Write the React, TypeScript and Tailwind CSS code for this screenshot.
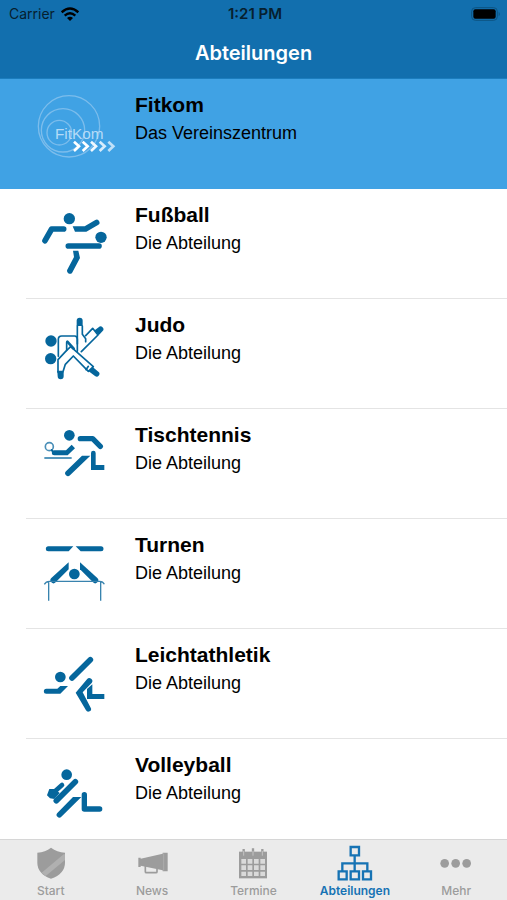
import type { ReactNode } from "react";

type Department = {
  id: string;
  name: string;
  subtitle: string;
  icon: ReactNode;
  highlighted?: boolean;
};

const Pictogram = ({ children }: { children: ReactNode }) => (
  <svg
    viewBox="0 0 270 270"
    className="size-[90px] shrink-0"
    fill="none"
    stroke="#05669c"
    strokeWidth="17"
    strokeLinecap="round"
    strokeLinejoin="round"
    aria-hidden="true"
  >
    {children}
  </svg>
);

const FitkomLogo = () => (
  <svg
    viewBox="0 0 270 270"
    className="size-[90px] shrink-0"
    fill="none"
    aria-hidden="true"
  >
    <g stroke="#7cbdec" strokeWidth="4">
      <circle cx="117" cy="112" r="92" />
      <circle cx="99" cy="124" r="65" />
      <circle cx="88" cy="131" r="37" />
    </g>
    <text
      x="75"
      y="149"
      fontSize="46"
      fill="#b5dbf7"
      fontFamily="Liberation Sans, Arial, sans-serif"
    >
      FitKom
    </text>
    <g strokeWidth="8">
      <path d="M132 158l15 14-15 14M158 158l15 14-15 14" stroke="#fff" />
      <path d="M183 158l15 14-15 14" stroke="#f0f8fe" />
      <path d="M209 158l15 14-15 14" stroke="#d8ecfb" />
      <path d="M235 158l15 14-15 14" stroke="#bfe0f8" />
    </g>
  </svg>
);

const SoccerIcon = () => (
  <Pictogram>
    <g fill="#05669c" stroke="none">
      <circle cx="118" cy="56" r="17" />
      <circle cx="213" cy="112" r="17" />
      <path d="M128 79h36l32-19a8 8 0 0 1 8 15L169 95h-34z" />
      <path d="M129 152h16l5 22-24 45a9 9 0 0 1-15-8l21-40z" />
    </g>
    <path d="M101 87H65L45 122" />
    <path d="M115 138h92" />
  </Pictogram>
);

const JudoIcon = () => (
  <Pictogram>
    <g fill="#05669c" stroke="none">
      <circle cx="63" cy="93" r="17" />
      <circle cx="62" cy="146" r="17" />
      <path d="M140 48V32a8 8 0 0 1 18 0v16z" />
      <path d="M194 61l12-9a8 8 0 0 1 12 11l-12 13z" />
      <path d="M82 185h19v14a8 8 0 0 1-18 0z" />
      <path d="M188 171l17 14a8 8 0 0 1-10 13l-19-14z" />
    </g>
    <g strokeWidth="5">
      <path d="M142 48v54M157 48v25l10 13v9M167 77l21-22 16 20-50 50" />
      <path d="M85 139V88q0-10 10-10h39q8 0 8 10v36" />
      <path d="M84 185v-36l26-28v-24" />
      <path d="M122 110l68 60-15 14-45-46-24 25-7 22H84" />
      <path d="M110 121l12-11M168 179l7-10" />
    </g>
    <path d="M112 95l19 21" strokeWidth="8" />
  </Pictogram>
);

const TableTennisIcon = () => (
  <Pictogram>
    <circle cx="118" cy="46" r="16" fill="#05669c" stroke="none" />
    <circle cx="58" cy="80" r="12" strokeWidth="5" stroke="#4a8fb8" />
    <path d="M65 90l5 7" strokeWidth="6" />
    <path d="M43 114h82" strokeWidth="6" stroke="#5798bd" strokeLinecap="butt" />
    <path d="M151 56h37l23 23" strokeWidth="16" />
    <g fill="#05669c" stroke="none">
      <path d="M73 91h35l17-17 10 11-22 21H73a7 7 0 0 1 0-15z" />
      <path d="M156 107h25l-61 59a8 8 0 0 1-12-12z" />
      <path d="M183 99a7 7 0 0 1 14 0v36h26v15h-40z" />
    </g>
  </Pictogram>
);

const GymnasticsIcon = () => (
  <Pictogram>
    <g transform="translate(0 15)">
      <g fill="#05669c" stroke="none">
        <circle cx="133" cy="117" r="16" />
        <path d="M55 34h75l-14 15H55a7 7 0 0 1 0-15z" />
        <path d="M137 34h76a7 7 0 0 1 0 15h-61z" />
        <path d="M116 82v21l-39 39a8 8 0 0 1-13-13z" />
        <path d="M150 82v21l39 39a8 8 0 0 0 13-13z" />
      </g>
      <path
        d="M43 148q5-9 15-9h151q10 0 14 9M56 140v57M212 140v57"
        strokeWidth="4"
        stroke="#3883ae"
        strokeLinecap="butt"
      />
    </g>
  </Pictogram>
);

const AthleticsIcon = () => (
  <Pictogram>
    <g transform="translate(0 15)">
      <path d="M126 99l55-55" />
      <g fill="#05669c" stroke="none">
        <circle cx="91" cy="96" r="16" />
        <path d="M49 131h33l9-8h23l-23 23H49a7 7 0 0 1 0-15z" />
        <path d="M171 103a8 8 0 0 1 14 11l-27 28 24 46a8 8 0 0 1-14 8l-31-53z" />
        <path d="M171 132l16-14v29h36v15h-52z" />
      </g>
    </g>
  </Pictogram>
);

const VolleyballIcon = () => (
  <Pictogram>
    <g transform="translate(0 30)">
      <path d="M79 122l57-57" />
      <path d="M163 104v43h46" strokeWidth="16" />
      <path d="M70 98l26-23" strokeWidth="14" />
      <g fill="#05669c" stroke="none">
        <circle cx="110" cy="44" r="16" />
        <path d="M129 111h25l-60 59a8 8 0 0 1-12-11z" />
        <path d="M58 87h16l15 12-16 18-13-2-9-9z" />
      </g>
    </g>
  </Pictogram>
);

const departments: Department[] = [
  {
    id: "fitkom",
    name: "Fitkom",
    subtitle: "Das Vereinszentrum",
    icon: <FitkomLogo />,
    highlighted: true,
  },
  { id: "fussball", name: "Fußball", subtitle: "Die Abteilung", icon: <SoccerIcon /> },
  { id: "judo", name: "Judo", subtitle: "Die Abteilung", icon: <JudoIcon /> },
  {
    id: "tischtennis",
    name: "Tischtennis",
    subtitle: "Die Abteilung",
    icon: <TableTennisIcon />,
  },
  { id: "turnen", name: "Turnen", subtitle: "Die Abteilung", icon: <GymnasticsIcon /> },
  {
    id: "leichtathletik",
    name: "Leichtathletik",
    subtitle: "Die Abteilung",
    icon: <AthleticsIcon />,
  },
  {
    id: "volleyball",
    name: "Volleyball",
    subtitle: "Die Abteilung",
    icon: <VolleyballIcon />,
  },
];

const TabIcon = ({ children }: { children: ReactNode }) => (
  <svg viewBox="0 0 108 108" className="size-9 shrink-0" fill="currentColor" aria-hidden="true">
    {children}
  </svg>
);

const tabs = [
  {
    label: "Start",
    icon: (
      <TabIcon>
        <path d="M54 8q18 13 42 15v30q0 33-42 48Q13 86 13 53V23q24-2 41-15z" />
        <path d="M92 28L26 83l12 10L96 45V28z" fill="#b0b0b0" />
      </TabIcon>
    ),
  },
  {
    label: "News",
    icon: (
      <TabIcon>
        <path d="M13 38h7v3l66-15v-3h15v56H86v-3L20 62v4h-7z" />
        <path d="M89 25v52" stroke="#b4b4b4" strokeWidth="2" />
        <path d="M34 63v17q0 3 3 3h29q3 0 3-3V70" fill="none" stroke="currentColor" strokeWidth="5" />
      </TabIcon>
    ),
  },
  {
    label: "Termine",
    icon: (
      <TabIcon>
        <path d="M12 20h84v80H12z" />
        <path d="M26 12v14M54 10v14M82 12v14" stroke="currentColor" strokeWidth="7" />
        <path d="M26 18v14M54 18v14M82 18v14" stroke="#c4c4c4" strokeWidth="3" />
        <path
          d="M19 42h14v14H19zM38 42h14v14H38zM57 42h14v14H57zM76 42h14v14H76zM19 61h14v14H19zM38 61h14v14H38zM57 61h14v14H57zM76 61h14v14H76zM19 80h14v13H19zM38 80h14v13H38zM57 80h14v13H57zM76 80h14v13H76z"
          fill="#dadada"
        />
      </TabIcon>
    ),
  },
  {
    label: "Abteilungen",
    active: true,
    icon: (
      <TabIcon>
        <g fill="none" stroke="currentColor" strokeWidth="7">
          <path d="M41 6h25v25H41zM5 79h24v24H5zM41 79h25v24H41zM78 79h24v24H78z" />
          <path d="M53 31v48M16 79V55h75v24" />
        </g>
      </TabIcon>
    ),
  },
  {
    label: "Mehr",
    icon: (
      <TabIcon>
        <circle cx="20" cy="55" r="13" />
        <circle cx="53" cy="55" r="13" />
        <circle cx="86" cy="55" r="13" />
      </TabIcon>
    ),
  },
];

const StatusBar = () => (
  <div className="grid h-7 grid-cols-3 items-center pl-[9px] pr-1.5 text-[#06202f]">
    <div className="flex items-center gap-1.5">
      <span className="text-sm">Carrier</span>
      <svg viewBox="0 0 54 42" className="h-3.5 w-[18px] text-black" fill="none" aria-label="WLAN">
        <g stroke="currentColor" strokeWidth="7">
          <path d="M2 16q25-23 50 0" />
          <path d="M11 26q16-15 32 0" />
        </g>
        <path d="M18 33q9-8 18 0l-9 9z" fill="currentColor" />
      </svg>
    </div>
    <span className="text-center text-[15px] font-semibold">1:21 PM</span>
    <svg viewBox="0 0 90 42" className="h-3.5 w-[30px] justify-self-end" aria-label="Akku">
      <rect x="2" y="2" width="77" height="38" rx="11" fill="none" stroke="#0d5482" strokeWidth="3" />
      <rect x="7" y="7" width="67" height="28" rx="6" fill="#000" />
      <path d="M83 14q7 7 0 14z" fill="#0d5482" />
    </svg>
  </div>
);

const DepartmentRow = ({ data }: { data: Department }) => (
  <li className={data.highlighted ? "bg-[#40a2e4]" : "bg-white"}>
    <a href={`#${data.id}`} className="block pl-[26px]">
      <div
        className={`flex h-[110px] gap-[15px] border-b pl-1 ${
          data.highlighted ? "border-[#40a2e4]" : "border-[#e4e4e4]"
        }`}
      >
        <div className={data.highlighted ? "pt-2.5" : "pt-[11px]"}>{data.icon}</div>
        <div className="pt-3 font-['Liberation_Sans',Arial,sans-serif] text-black">
          <h2 className="text-[21px] leading-7 font-bold">{data.name}</h2>
          <p className="text-lg leading-7">{data.subtitle}</p>
        </div>
      </div>
    </a>
  </li>
);

const App = () => {
  return (
    <div className="flex h-dvh flex-col bg-white font-['Inter',sans-serif]">
      <header className="shrink-0 border-b border-[#1b7dbe] bg-[#126fae]">
        <StatusBar />
        <h1 className="flex h-[50px] items-center justify-center text-xl font-semibold text-white">
          Abteilungen
        </h1>
      </header>
      <main className="min-h-0 flex-1 overflow-y-auto [scrollbar-width:none]">
        <ul>
          {departments.map((department) => (
            <DepartmentRow key={department.id} data={department} />
          ))}
        </ul>
      </main>
      <nav className="grid shrink-0 grid-cols-5 border-t border-[#d6d6d6] bg-[#ebebeb]">
        {tabs.map((tab) => (
          <button
            key={tab.label}
            aria-current={tab.active ? "page" : undefined}
            className={`flex h-[60px] flex-col items-center pt-[5px] ${
              tab.active ? "font-semibold text-[#1673b4]" : "font-medium text-[#9c9c9c]"
            }`}
          >
            {tab.icon}
            <span className="text-xs leading-5">{tab.label}</span>
          </button>
        ))}
      </nav>
    </div>
  );
};

export default App;
